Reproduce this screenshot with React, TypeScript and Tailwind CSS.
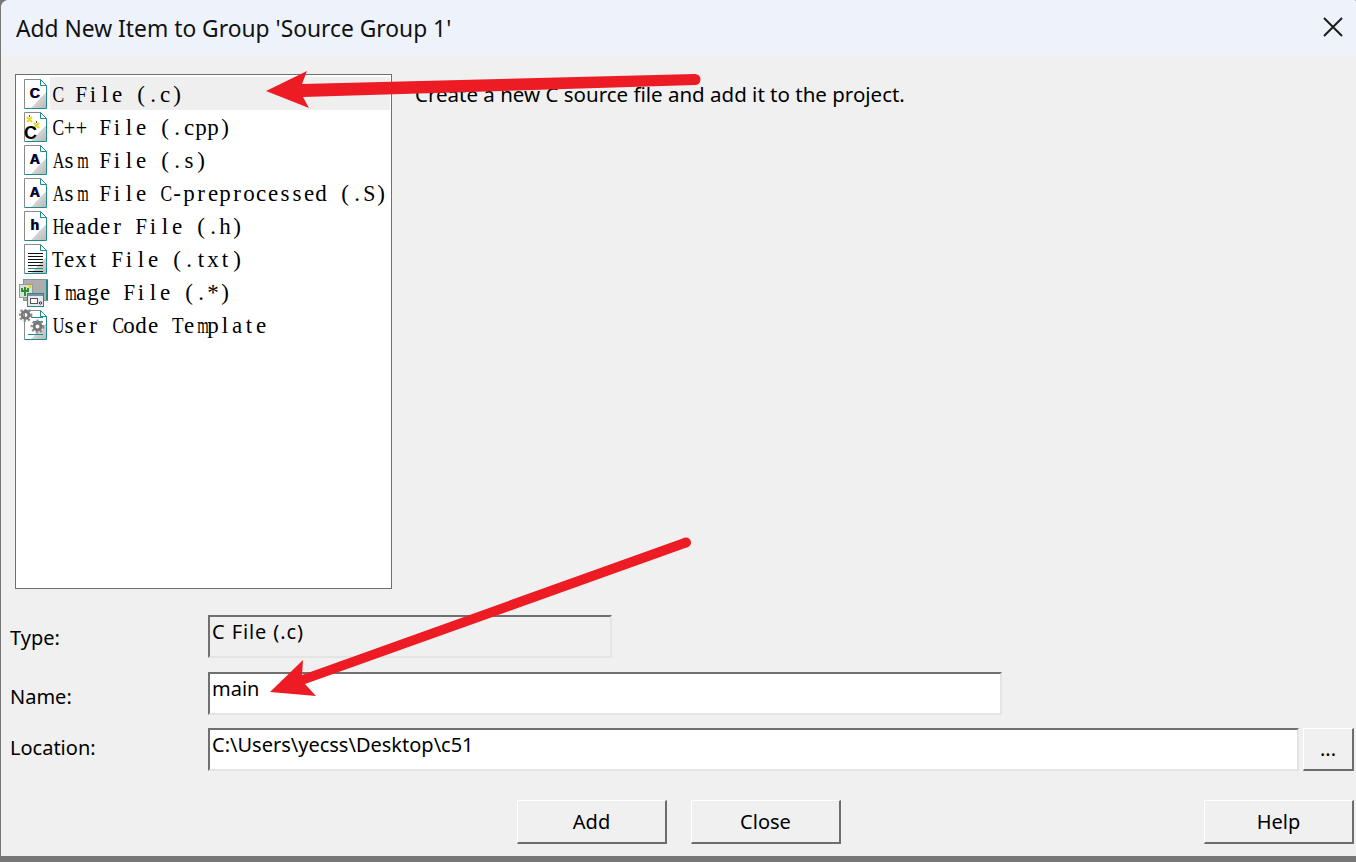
import React from "react";

const UI = "font-['Noto_Sans','Open_Sans',sans-serif]";

const squeeze: Record<string, string> = {
  C: "scale-x-[0.76]",
  A: "scale-x-[0.7]",
  H: "scale-x-[0.7]",
  U: "scale-x-[0.7]",
  M: "scale-x-[0.6]",
  m: "scale-x-[0.64]",
  T: "scale-x-[0.82]",
  F: "scale-x-[0.9]",
  "+": "scale-x-[0.88]",
  S: "scale-x-[0.95]",
};

function Mono({ text }: { text: string }) {
  return (
    <span aria-label={text} className="mt-[2px] flex font-['Liberation_Serif',serif] text-[23px] leading-none text-black">
      {text.split("").map((c, i) => (
        <span key={i} className={`inline-block w-[12px] text-center whitespace-pre ${squeeze[c] ?? ""}`}>
          {c}
        </span>
      ))}
    </span>
  );
}

function Page({ children }: { children?: React.ReactNode }) {
  return (
    <>
      <polygon points="5.5,1.5 21.5,1.5 27.5,7.5 27.5,30.5 5.5,30.5" fill="#ffffff" />
      <polygon points="27,10 27,30 8,30" fill="url(#wedge)" />
      <polyline points="21.5,1.5 5.5,1.5 5.5,30.5" fill="none" stroke="#8a8a8a" strokeWidth="1" />
      <polyline points="5.5,30.5 27.5,30.5 27.5,7.5 21.5,1.5 21.5,7.5 27.5,7.5" fill="none" stroke="#1f8a8a" strokeWidth="1" />
      {children}
    </>
  );
}

function Letter({ c, y = 20, x = 15.5 }: { c: string; y?: number; x?: number }) {
  return (
    <>
      <text x={x + 0.8} y={y} textAnchor="middle" fontFamily="Liberation Sans" fontWeight="700" fontSize="14" fill="#2222dd">{c}</text>
      <text x={x} y={y} textAnchor="middle" fontFamily="Liberation Sans" fontWeight="700" fontSize="14" fill="#000000">{c}</text>
    </>
  );
}

function Gear({ x, y }: { x: number; y: number }) {
  return (
    <g>
      <circle cx={x} cy={y} r="5.6" fill="none" stroke="#8c8c8c" strokeWidth="2.6" strokeDasharray="2.2 1.9" />
      <circle cx={x} cy={y} r="3.4" fill="none" stroke="#777777" strokeWidth="2.8" />
    </g>
  );
}

function Icon({ kind }: { kind: string }) {
  return (
    <svg width="30" height="32" viewBox="0 0 30 32" className="shrink-0">
      <defs>
        <linearGradient id="wedge" x1="0.2" y1="0.2" x2="1" y2="1">
          <stop offset="0" stopColor="#ffffff" />
          <stop offset="0.5" stopColor="#ffffff" />
          <stop offset="0.52" stopColor="#d4d4d4" />
          <stop offset="1" stopColor="#b8b8b8" />
        </linearGradient>
      </defs>
      {kind === "c" && <Page><Letter c="C" /></Page>}
      {kind === "a" && <Page><Letter c="A" /></Page>}
      {kind === "h" && <Page><Letter c="h" /></Page>}
      {kind === "cpp" && (
        <Page>
          <path d="M8 6l5 5M13 6l-5 5M15 12l5 5M20 12l-5 5" stroke="#e8d820" strokeWidth="2" fill="none" />
          <path d="M10.5 4v2M17.5 10v2" stroke="#555" strokeWidth="1" fill="none" />
          <text x="11.5" y="28" textAnchor="middle" fontFamily="Liberation Sans" fontWeight="700" fontSize="18" fill="#000">C</text>
        </Page>
      )}
      {kind === "txt" && (
        <Page>
          <path d="M9 10.5h15M9 13.5h15M9 16.5h15M9 19.5h15M9 22.5h15" stroke="#111" strokeWidth="1" />
          <path d="M9 25.5h15" stroke="#1f8a8a" strokeWidth="1" />
          <path d="M9 28.5h15" stroke="#111" strokeWidth="1" />
        </Page>
      )}
      {kind === "img" && (
        <g>
          <rect x="4.5" y="3.5" width="24" height="21" fill="#adadad" stroke="#7d9898" />
          <rect x="27" y="4" width="2" height="20" fill="#1f8a8a" />
          <rect x="0.5" y="8.5" width="13" height="13" fill="#d6e4d6" stroke="#999" />
          <path d="M6 20V11M3 12v3h6v-3" stroke="#2e8b2e" strokeWidth="2" fill="none" />
          <circle cx="11" cy="10.5" r="1.7" fill="#e8d820" />
          <rect x="8.5" y="17.5" width="16" height="13" fill="#e9e9e9" stroke="#1f8a8a" />
          <rect x="9" y="18" width="15" height="2" fill="#7b8fa8" />
          <rect x="11.5" y="22.5" width="7" height="5" fill="#fff" stroke="#555" />
          <circle cx="21.5" cy="27" r="1.2" fill="none" stroke="#22229a" />
        </g>
      )}
      {kind === "gear" && (
        <Page>
          <path d="M12 8.5h12M14 12.5h10M22 16.5h3M9 25.5h15" stroke="#1f8a8a" strokeWidth="1" />
          <Gear x={6.5} y={6} />
          <Gear x={18.5} y={17.5} />
        </Page>
      )}
    </svg>
  );
}

const items: [string, string][] = [
  ["c", "C File (.c)"],
  ["cpp", "C++ File (.cpp)"],
  ["a", "Asm File (.s)"],
  ["a", "Asm File C-preprocessed (.S)"],
  ["h", "Header File (.h)"],
  ["txt", "Text File (.txt)"],
  ["img", "Image File (.*)"],
  ["gear", "User Code Template"],
];

function Field({ className, children }: { className: string; children?: React.ReactNode }) {
  return (
    <div className={`h-[43px] border-2 border-t-[#707070] border-l-[#707070] border-r-[#e4e4e4] border-b-[#e4e4e4] pl-[2px] text-[20px] leading-[30px] text-black ${className}`}>
      {children}
    </div>
  );
}

function Btn({ className, children }: { className: string; children: React.ReactNode }) {
  return (
    <button className={`h-[44px] border border-t-white border-l-white border-r-2 border-b-2 border-r-[#6d6d6d] border-b-[#6d6d6d] bg-[#f0f0f0] text-[20px] text-black ${className}`}>
      {children}
    </button>
  );
}

export default function App() {
  return (
    <div className={`relative h-[862px] w-[1356px] overflow-hidden bg-[#777777] pb-[6px] pl-[1px] ${UI}`}>
      <div className="flex h-full flex-col overflow-hidden rounded-tl-[8px] rounded-tr-[2px] bg-[#f0f0f0]">
        <div className="flex h-[55px] shrink-0 items-center justify-between bg-[#eef3fb] pl-[15px] pr-[11px]">
          <span className="pt-[4px] text-[22.8px] leading-none text-[#111]">Add New Item to Group 'Source Group 1'</span>
          <svg width="24" height="24" viewBox="0 0 24 24" className="mb-[1px]">
            <path d="M3 3l18 18M21 3L3 21" stroke="#1a1a1a" strokeWidth="2" fill="none" />
          </svg>
        </div>

        <div className="flex h-[534px] shrink-0 pl-[14px] pt-[19px]">
          <div className="h-[515px] w-[377px] shrink-0 border border-[#6f6f6f] bg-white pl-[3px] pr-[1px] pt-[2px]">
            {items.map(([k, t], i) => (
              <div key={t} className="flex h-[33px] items-center">
                <Icon kind={k} />
                <div className={`ml-[1px] flex h-full flex-1 items-center pl-[1px] ${i === 0 ? "bg-[#efefef]" : ""}`}>
                  <Mono text={t} />
                </div>
              </div>
            ))}
          </div>
          <div className="ml-[23px] pt-[6px] text-[20.5px] leading-[28px] text-black">
            Create a new C source file and add it to the project.
          </div>
        </div>

        <div className="flex flex-col pl-[9px]">
          <div className="mt-[26px] flex items-start">
            <span className="mt-[9px] w-[198px] text-[20px] leading-[28px] text-black">Type:</span>
            <Field className="w-[404px] bg-[#f0f0f0] tracking-[0.9px]">C File (.c)</Field>
          </div>
          <div className="mt-[14px] flex items-start">
            <span className="mt-[11px] w-[198px] text-[20px] leading-[28px] text-black">Name:</span>
            <Field className="w-[794px] bg-white">main</Field>
          </div>
          <div className="mt-[13px] flex items-start">
            <span className="mt-[6px] w-[198px] text-[20px] leading-[28px] text-black">Location:</span>
            <Field className="w-[1091px] bg-white">C:\Users\yecss\Desktop\c51</Field>
            <Btn className="ml-[4px] !h-[43px] w-[51px]">...</Btn>
          </div>
        </div>

        <div className="mt-[29px] flex pl-[516px]">
          <Btn className="w-[150px]">Add</Btn>
          <Btn className="ml-[24px] w-[150px]">Close</Btn>
          <Btn className="ml-[363px] w-[150px]">Help</Btn>
        </div>
      </div>

      <svg className="pointer-events-none absolute left-0 top-0" width="1356" height="862" viewBox="0 0 1356 862">
        <polygon points="266,91 307,71 302,84 695,74 695,85 303,97 309,108" fill="#ed1c24" />
        <circle cx="695" cy="79.5" r="5.5" fill="#ed1c24" />
        <polygon points="270,692 303,660 302,675 684,538 688,547 305,684 316,696" fill="#ed1c24" />
        <circle cx="686" cy="542.5" r="5" fill="#ed1c24" />
      </svg>
    </div>
  );
}
